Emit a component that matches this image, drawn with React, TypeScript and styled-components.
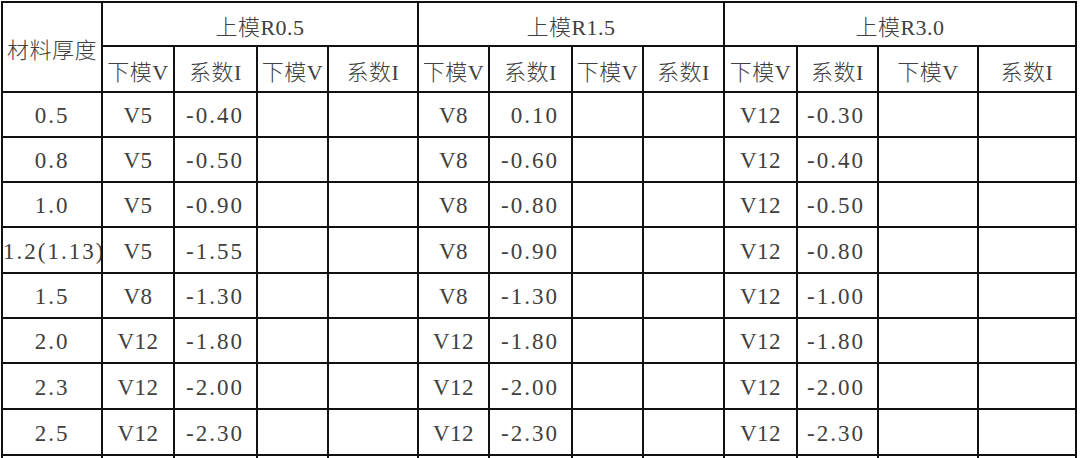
import styled, { createGlobalStyle } from "styled-components";

const GlobalStyle = createGlobalStyle`
  html, body {
    margin: 0;
    padding: 0;
    background: #ffffff;
  }
  body {
    width: 1080px;
    height: 458px;
    overflow: hidden;
  }
`;

const Page = styled.div`
  padding: 1px 0 0 1px;
`;

const Table = styled.table`
  border-collapse: collapse;
  table-layout: fixed;
  width: 1076px;
  font-family: "Liberation Serif", "Noto Sans CJK SC", serif;
  font-size: 22px;
  color: #404040;
`;

const HeadRow = styled.tr<{ $h: number }>`
  height: ${(p) => p.$h}px;
`;

const BodyRow = styled.tr<{ $h: number }>`
  height: ${(p) => p.$h}px;
`;

const HeadCell = styled.th`
  border: 2px solid #111;
  padding: 2px 0 0 0;
  font-weight: 300;
  text-align: center;
  vertical-align: middle;
  white-space: nowrap;
  overflow: hidden;
  letter-spacing: 0.5px;
`;

// $kind: "num" for thickness / coefficient values, "die" for the V columns
const Cell = styled.td<{ $align?: "center" | "right"; $kind?: "num" | "die" }>`
  border: 2px solid #111;
  padding: 3px ${(p) => (p.$align === "right" ? "12px" : "0")} 0 0;
  text-align: ${(p) => p.$align || "center"};
  vertical-align: middle;
  white-space: nowrap;
  overflow: hidden;
  font-size: 23px;
  letter-spacing: ${(p) => (p.$kind === "die" ? "0.5px" : "2px")};
`;

const colWidths = [100, 72, 83, 71, 90, 71, 83, 71, 81, 73, 81, 100, 98];

const groups = ["上模R0.5", "上模R1.5", "上模R3.0"];

const rows = [
  ["0.5", "V5", "-0.40", "V8", "0.10", "V12", "-0.30"],
  ["0.8", "V5", "-0.50", "V8", "-0.60", "V12", "-0.40"],
  ["1.0", "V5", "-0.90", "V8", "-0.80", "V12", "-0.50"],
  ["1.2(1.13)", "V5", "-1.55", "V8", "-0.90", "V12", "-0.80"],
  ["1.5", "V8", "-1.30", "V8", "-1.30", "V12", "-1.00"],
  ["2.0", "V12", "-1.80", "V12", "-1.80", "V12", "-1.80"],
  ["2.3", "V12", "-2.00", "V12", "-2.00", "V12", "-2.00"],
  ["2.5", "V12", "-2.30", "V12", "-2.30", "V12", "-2.30"],
  ["", "", "", "", "", "", ""],
];

const rowHeights = [45, 45, 45, 46, 45, 45, 46, 46, 45];

export default function App() {
  return (
    <Page>
      <GlobalStyle />
      <Table>
        <colgroup>
          {colWidths.map((w, i) => (
            <col key={i} style={{ width: w }} />
          ))}
        </colgroup>
        <thead>
          <HeadRow $h={44}>
            <HeadCell rowSpan={2}>材料厚度</HeadCell>
            {groups.map((g) => (
              <HeadCell key={g} colSpan={4}>
                {g}
              </HeadCell>
            ))}
          </HeadRow>
          <HeadRow $h={46}>
            {groups.map((g) => [
              <HeadCell key={g + "a"}>下模V</HeadCell>,
              <HeadCell key={g + "b"}>系数I</HeadCell>,
              <HeadCell key={g + "c"}>下模V</HeadCell>,
              <HeadCell key={g + "d"}>系数I</HeadCell>,
            ])}
          </HeadRow>
        </thead>
        <tbody>
          {rows.map((r, i) => (
            <BodyRow key={i} $h={rowHeights[i]}>
              <Cell $kind="num">{r[0]}</Cell>
              {[0, 1, 2].map((g) => [
                <Cell key={g + "v"} $kind="die">
                  {r[1 + g * 2]}
                </Cell>,
                <Cell key={g + "k"} $align="right" $kind="num">
                  {r[2 + g * 2]}
                </Cell>,
                <Cell key={g + "e"} />,
                <Cell key={g + "f"} />,
              ])}
            </BodyRow>
          ))}
        </tbody>
      </Table>
    </Page>
  );
}
